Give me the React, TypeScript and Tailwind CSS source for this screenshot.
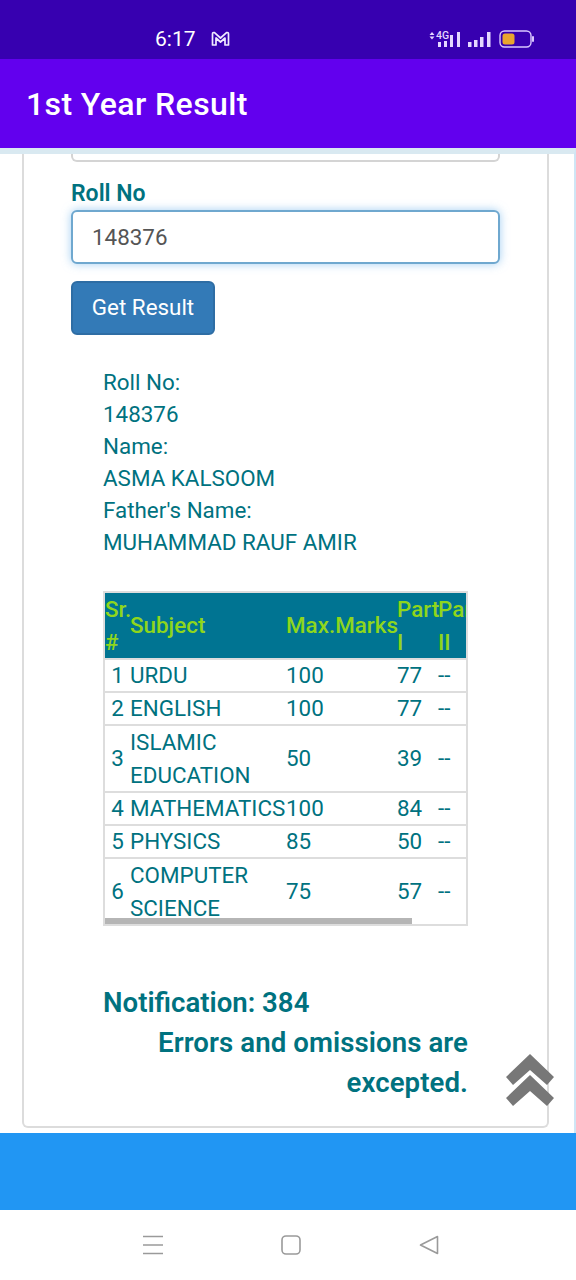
import { useState } from 'react';

interface Row {
    sr: number;
    subject: string[];
    max: number;
    part1: number;
}

const rows: Row[] = [
    { sr: 1, subject: ['URDU'], max: 100, part1: 77 },
    { sr: 2, subject: ['ENGLISH'], max: 100, part1: 77 },
    { sr: 3, subject: ['ISLAMIC', 'EDUCATION'], max: 50, part1: 39 },
    { sr: 4, subject: ['MATHEMATICS'], max: 100, part1: 84 },
    { sr: 5, subject: ['PHYSICS'], max: 85, part1: 50 },
    { sr: 6, subject: ['COMPUTER', 'SCIENCE'], max: 75, part1: 57 },
];

function StatusIcons() {
    return (
        <div className="-mt-[1px] ml-auto flex items-center gap-[8px] pr-[41px]">
            <svg width="62" height="18" viewBox="0 0 62 18" fill="none">
                {/* up/down arrows */}
                <path d="M0.5 5 L3 2 L5.5 5 Z M0.5 6.5 L3 9.5 L5.5 6.5 Z" fill="#e5d8ff" />
                <text x="7" y="9" fontSize="10.5" fontWeight="500" fontFamily="Roboto, sans-serif" fill="#e5d8ff">4G</text>
                <rect x="9" y="12" width="3" height="5" fill="#e5d8ff" />
                <rect x="15" y="11" width="3" height="6" fill="#e5d8ff" />
                <rect x="21" y="5" width="3" height="12" fill="#e5d8ff" />
                <rect x="28" y="2" width="3" height="15" fill="#e5d8ff" />
                <rect x="39" y="12" width="3.5" height="5" fill="#e5d8ff" />
                <rect x="45" y="10" width="3.5" height="7" fill="#e5d8ff" />
                <rect x="51" y="7" width="3.5" height="10" fill="#e5d8ff" />
                <rect x="58" y="2" width="3.5" height="15" fill="#e5d8ff" />
            </svg>
            <svg width="36" height="18" viewBox="0 0 36 18" fill="none">
                <rect x="1" y="1" width="31" height="16" rx="4.5" stroke="#d9c6ff" strokeWidth="1.4" />
                <rect x="3.5" y="3.5" width="12" height="11" rx="2.5" fill="#e9a52e" />
                <rect x="33" y="6" width="2" height="6" rx="1" fill="#d9c6ff" />
            </svg>
        </div>
    );
}

export default function App() {
    const [rollNo, setRollNo] = useState('148376');

    return (
        <div className="flex h-[1280px] w-[576px] flex-col overflow-hidden bg-white font-['Roboto',sans-serif] text-[#00727f]">
            {/* Status bar */}
            <div className="flex h-[59px] shrink-0 items-center bg-[#3700b0] pl-[155px] pt-[19px] text-white">
                <span className="text-[21px] leading-none">6:17</span>
                <svg className="ml-[15px]" width="19" height="16" viewBox="0 0 19 16" fill="none" stroke="#f0eaff" strokeWidth="1.7" strokeLinejoin="round">
                    <path d="M1.5 14 V3 Q1.5 1.2 3.5 1.6 L9.5 7 L15.5 1.6 Q17.5 1.2 17.5 3 V14 H14 V7 L9.5 11 L5 7 V14 Z" />
                </svg>
                <StatusIcons />
            </div>

            {/* App bar */}
            <div className="flex h-[89px] shrink-0 items-center bg-[#6200ee] pl-[26px]">
                <h1 className="text-[32px] font-medium leading-none tracking-[0.4px] text-white">1st Year Result</h1>
            </div>

            {/* Web content */}
            <div className="relative h-[985px] shrink-0 overflow-hidden border-r-2 border-t-[6px] border-r-[#cfe6f5] border-t-[#d9e9f1] pl-[22px] pr-[25px]">
                <div className="h-[974px] rounded-b-[6px] border-x-2 border-b-2 border-[#dcdcdc] pl-[47px] pr-[47px]">
                    <div className="h-[8px] rounded-b-[6px] border-x-2 border-b-2 border-[#d4d4d4]" />
                    <label className="mt-[19px] block text-[23px] font-semibold leading-[26px] text-[#00727f]">Roll No</label>
                    <input
                        value={rollNo}
                        onChange={(e) => setRollNo(e.target.value)}
                        className="mt-[3px] block h-[54px] w-full rounded-[6px] border-2 border-[#6fa8cf] bg-white px-[19px] text-[22.4px] text-[#555] shadow-[0_0_10px_rgba(102,175,233,0.6)] outline-none"
                    />
                    <button className="mt-[17px] block h-[54px] w-[144px] rounded-[6px] border-2 border-[#2e6da4] bg-[#337ab7] text-center text-[22.4px] text-white">
                        Get Result
                    </button>

                    <div className="ml-[32px] mt-[31px] text-[22.4px] leading-[32px]">
                        <div>Roll No:</div>
                        <div>148376</div>
                        <div>Name:</div>
                        <div>ASMA KALSOOM</div>
                        <div>Father's Name:</div>
                        <div>MUHAMMAD RAUF AMIR</div>
                    </div>

                    {/* Result table, cut off on the right like a scrolled container */}
                    <div className="relative ml-[32px] mt-[33px] h-[335px] w-[365px] overflow-hidden border-2 border-[#dddddd]">
                        <table className="w-[420px] table-fixed border-collapse text-[22.4px]">
                            <colgroup>
                                <col className="w-[25px]" />
                                <col className="w-[156px]" />
                                <col className="w-[111px]" />
                                <col className="w-[41px]" />
                                <col className="w-[87px]" />
                            </colgroup>
                            <thead className="leading-[32.5px]">
                                <tr className="bg-[#007492] text-left text-[#8fd61c]">
                                    <th className="p-0 font-medium">Sr. #</th>
                                    <th className="p-0 font-medium">Subject</th>
                                    <th className="whitespace-nowrap p-0 font-medium">Max.Marks</th>
                                    <th className="p-0 font-medium">Part I</th>
                                    <th className="p-0 font-medium">
                                        <span className="block w-[41px]">Part II</span>
                                    </th>
                                </tr>
                            </thead>
                            <tbody className="leading-[31px]">
                                {rows.map((row) => (
                                    <tr key={row.sr} className="border-t-2 border-[#dddddd]">
                                        <td className="p-0 text-center">{row.sr}</td>
                                        <td className={row.subject.length > 1 ? 'p-0 leading-[32.5px]' : 'p-0'}>
                                            {row.subject.map((line) => (
                                                <div key={line}>{line}</div>
                                            ))}
                                        </td>
                                        <td className="p-0">{row.max}</td>
                                        <td className="p-0">{row.part1}</td>
                                        <td className="p-0">--</td>
                                    </tr>
                                ))}
                            </tbody>
                        </table>
                        <div className="absolute bottom-0 left-0 h-[6px] w-[307px] bg-[#b5b5b5]" />
                    </div>

                    <h3 className="ml-[32px] mt-[57px] text-[27.6px] font-semibold leading-[40px]">Notification: 384</h3>
                    <p className="ml-[32px] w-[365px] text-right text-[27.6px] font-semibold leading-[40px] tracking-[0.08px]">
                        Errors and omissions are excepted.
                    </p>
                </div>

                {/* Scroll to top */}
                <svg className="absolute bottom-[27px] right-[19px]" width="50" height="52" viewBox="0 0 50 52" fill="#777">
                    <path d="M25 0 L49 23 L42 31 L25 16 L8 31 L1 23 Z" />
                    <path d="M25 21 L49 44 L42 52 L25 37 L8 52 L1 44 Z" />
                </svg>
            </div>

            {/* Blue footer */}
            <div className="h-[77px] shrink-0 bg-[#2196f3]" />

            {/* Navigation bar */}
            <div className="flex flex-1 items-center justify-center gap-[118px] pb-[1px] pl-[5px]">
                <svg width="20" height="20" viewBox="0 0 20 20" stroke="#9a9a9a" strokeWidth="1.6">
                    <path d="M0 1.5 H20 M0 10 H20 M0 18.5 H20" />
                </svg>
                <svg width="20" height="20" viewBox="0 0 20 20" fill="none" stroke="#9a9a9a" strokeWidth="1.6">
                    <rect x="1" y="1" width="18" height="18" rx="4" />
                </svg>
                <svg width="20" height="20" viewBox="0 0 20 20" fill="none" stroke="#9a9a9a" strokeWidth="1.6" strokeLinejoin="round">
                    <path d="M18.5 1.5 V18.5 L1.5 10 Z" />
                </svg>
            </div>
        </div>
    );
}
